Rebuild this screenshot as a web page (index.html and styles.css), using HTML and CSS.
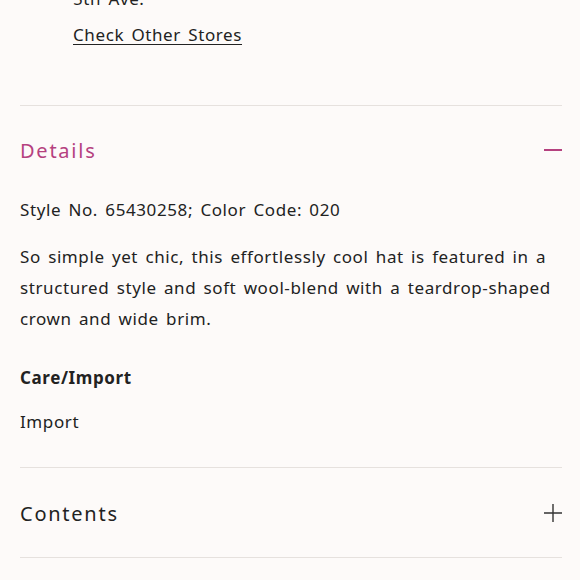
FILE: index.html
```html
<!DOCTYPE html>
<html lang="en">
<head>
<meta charset="utf-8">
<link rel="stylesheet" href="styles.css">
</head>
<body>
<main class="page">
  <section class="store">
    <p class="store-line">5th Ave.</p>
    <a class="store-link" href="#">Check Other Stores</a>
  </section>
  <section class="acc acc-open">
    <div class="acc-head">
      <h2 class="acc-title acc-title-active">Details</h2>
      <span class="minus"></span>
    </div>
    <div class="acc-body">
      <p class="txt">Style No. 65430258; Color Code: 020</p>
      <p class="txt desc">So simple yet chic, this effortlessly cool hat is featured in a structured style and soft wool-blend with a teardrop-shaped crown and wide brim.</p>
      <h3 class="sub">Care/Import</h3>
      <p class="txt last">Import</p>
    </div>
  </section>
  <section class="acc acc-closed">
    <div class="acc-head">
      <h2 class="acc-title">Contents</h2>
      <svg class="plus" width="20" height="20" viewBox="0 0 20 20"><path d="M10 1v18M1 10h18" stroke="#333" stroke-width="1.4" fill="none"/></svg>
    </div>
  </section>
</main>
</body>
</html>
```
FILE: styles.css
```css
html, body { margin: 0; padding: 0; background: #fdfaf9; }
body { font-family: "Noto Sans", "Open Sans", sans-serif; color: #222; }
.page { padding: 0 18px 0 20px; }
.store { padding-left: 53px; margin-top: -17px; padding-bottom: 55px; }
.store-line { margin: 0 0 5px; font-size: 17px; line-height: 31px; letter-spacing: 0.6px; word-spacing: 2.3px; }
.store-link { display: block; font-size: 17px; line-height: 31px; letter-spacing: 0.6px; word-spacing: 2.3px; color: #222; text-decoration: underline; text-underline-offset: 3px; text-decoration-thickness: 1px; }
.acc { border-top: 1px solid #e6e1de; }
.acc-closed { border-bottom: 1px solid #e6e1de; }
.acc-head { display: flex; align-items: center; justify-content: space-between; height: 88px; }
.acc-closed .acc-head { height: 89px; padding-top: 1px; box-sizing: border-box; }
.acc-title { margin: 0; font-weight: 400; font-size: 20px; letter-spacing: 1.75px; color: #222; }
.acc-title-active { color: #b5417f; }
.minus { width: 18px; height: 2px; background: #b5417f; }
.plus { margin-right: -1px; }
.acc-body { padding-bottom: 30px; }
.txt { margin: 0 0 16px; font-size: 17px; line-height: 31px; letter-spacing: 0.6px; word-spacing: 2.3px; }
.sub { margin: 28px 0 13px; font-size: 17px; line-height: 31px; font-weight: 700; letter-spacing: 0.6px; word-spacing: 2.3px; }
.last { margin: 0; }
```
